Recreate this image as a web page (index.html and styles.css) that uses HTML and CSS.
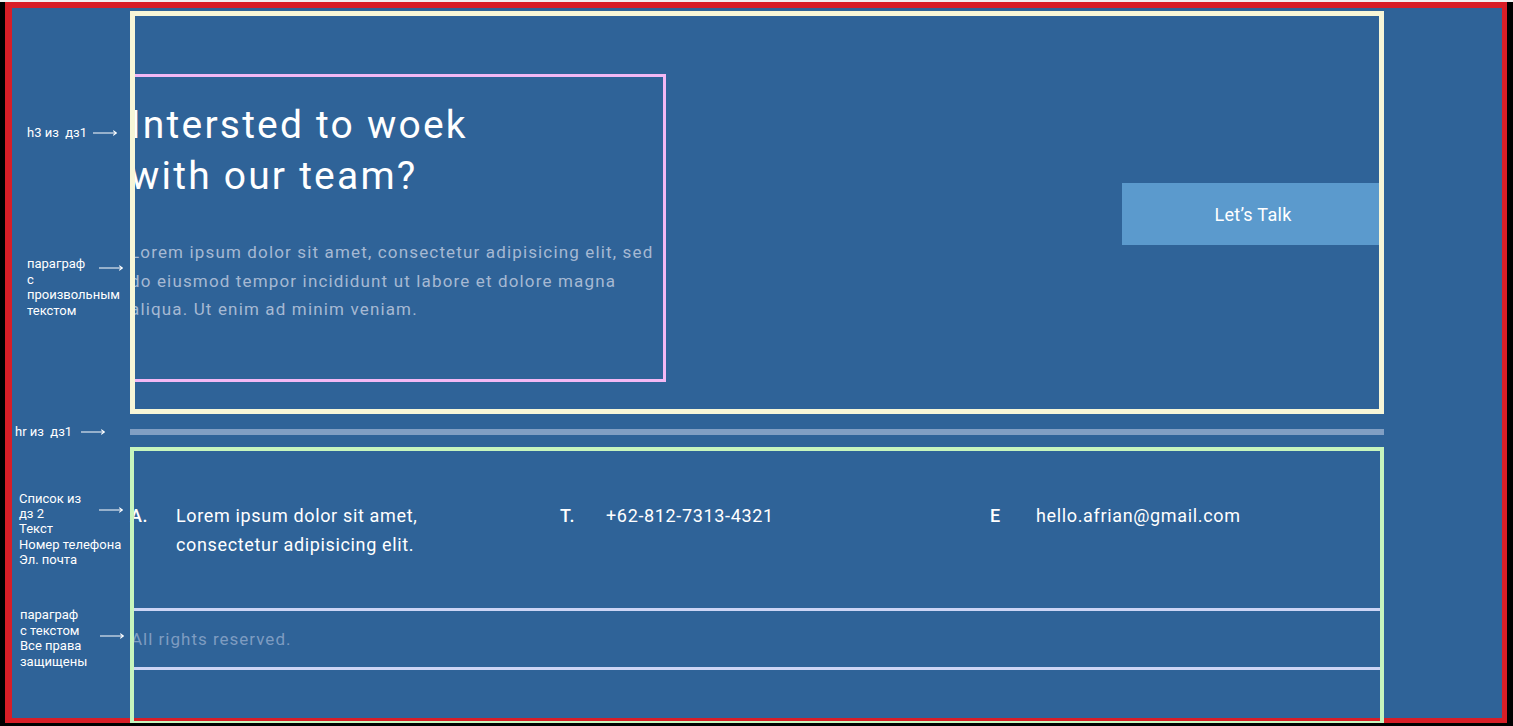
FILE: index.html
```html
<!DOCTYPE html>
<html lang="ru">
<head>
<meta charset="utf-8">
<title>Intersted to woek with our team?</title>
<link rel="stylesheet" href="styles.css">
</head>
<body>
<div class="frame">
  <aside class="notes">
    <div class="note note-h3">
      <span class="note-text">h3 из&nbsp; дз1</span>
      <svg class="arrow" viewBox="0 0 24 8"><path d="M0 4H23.2M20.2 1.6L23.4 4L20.2 6.4"/></svg>
    </div>
    <div class="note note-lead">
      <span class="note-text">параграф<br>с<br>произвольным<br>текстом</span>
      <svg class="arrow" viewBox="0 0 24 8"><path d="M0 4H23.2M20.2 1.6L23.4 4L20.2 6.4"/></svg>
    </div>
    <div class="note note-hr">
      <span class="note-text">hr из&nbsp; дз1</span>
      <svg class="arrow" viewBox="0 0 24 8"><path d="M0 4H23.2M20.2 1.6L23.4 4L20.2 6.4"/></svg>
    </div>
    <div class="note note-list">
      <span class="note-text">Список из<br>дз 2<br>Текст<br>Номер телефона<br>Эл. почта</span>
      <svg class="arrow" viewBox="0 0 24 8"><path d="M0 4H23.2M20.2 1.6L23.4 4L20.2 6.4"/></svg>
    </div>
    <div class="note note-rights">
      <span class="note-text">параграф<br>с текстом<br>Все права<br>защищены</span>
      <svg class="arrow" viewBox="0 0 24 8"><path d="M0 4H23.2M20.2 1.6L23.4 4L20.2 6.4"/></svg>
    </div>
  </aside>

  <main class="content">
    <section class="hero">
      <div class="intro">
        <h3 class="title">Intersted to woek<br>with our team?</h3>
        <p class="lead">Lorem ipsum dolor sit amet, consectetur adipisicing elit, sed do eiusmod tempor incididunt ut labore et dolore magna aliqua. Ut enim ad minim veniam.</p>
      </div>
      <a class="talk">Let’s Talk</a>
    </section>

    <hr class="rule">

    <section class="contacts">
      <ul class="contact-list">
        <li class="contact"><span class="contact-key">A.</span><span class="contact-val">Lorem ipsum dolor sit amet, consectetur adipisicing elit.</span></li>
        <li class="contact"><span class="contact-key">T.</span><span class="contact-val">+62-812-7313-4321</span></li>
        <li class="contact"><span class="contact-key">E</span><span class="contact-val">hello.afrian@gmail.com</span></li>
      </ul>
      <p class="rights">All rights reserved.</p>
    </section>
  </main>
</div>
</body>
</html>
```

FILE: styles.css
```css
html, body {
  margin: 0;
  padding: 0;
}

body {
  background: #000;
  border-top: 2px solid #f2f2f2;
  overflow: hidden;
  font-family: Roboto, "Noto Sans", sans-serif;
}

.frame {
  box-sizing: border-box;
  width: 1502px;
  height: 721px;
  margin-left: 5px;
  border-style: solid;
  border-color: #d81e27;
  border-width: 6px 5px 5px 7px;
  background: #2f6398;
  display: grid;
  grid-template-columns: 118px 1254px;
  align-items: start;
}

/* annotations */
.notes {
  display: flex;
  flex-direction: column;
  color: #fff;
  font-size: 13px;
  line-height: 15.4px;
}

.note {
  display: grid;
  justify-items: start;
  align-items: start;
}

.note > * {
  grid-area: 1 / 1;
}

.arrow {
  width: 24px;
  height: 8px;
  fill: none;
  stroke: #fff;
  stroke-width: 1.1;
}

.note-h3 { margin-top: 117px; }
.note-h3 .note-text { margin-left: 15px; }
.note-h3 .arrow { margin: 4px 0 0 81px; }

.note-lead { margin-top: 116px; }
.note-lead .note-text { margin-left: 15px; }
.note-lead .arrow { margin: 8px 0 0 87px; }

.note-hr { margin-top: 105.6px; }
.note-hr .note-text { margin-left: 3px; }
.note-hr .arrow { margin: 4.4px 0 0 69px; }

.note-list { margin-top: 51.5px; }
.note-list .note-text { margin-left: 7px; }
.note-list .arrow { margin: 15.5px 0 0 87px; }

.note-rights { margin-top: 39.8px; }
.note-rights .note-text { margin-left: 8px; }
.note-rights .arrow { margin: 24.7px 0 0 88px; }

/* main content */
.content {
  padding-top: 3px;
  display: flex;
  flex-direction: column;
}

.hero {
  box-sizing: border-box;
  height: 403px;
  display: flex;
  justify-content: space-between;
  align-items: center;
  outline: 5px solid #f7f6d7;
  outline-offset: -5px;
}

.intro {
  box-sizing: border-box;
  width: 536px;
  height: 308px;
  margin: 63px 0 32px;
  padding-top: 26px;
  outline: 3px solid #f3b8f4;
  outline-offset: -3px;
}

.title {
  margin: 0;
  font-size: 39px;
  font-weight: 400;
  line-height: 51px;
  letter-spacing: 2.2px;
  color: #fff;
}

.lead {
  margin: 36px 0 0;
  font-size: 17px;
  line-height: 28.5px;
  letter-spacing: 1.15px;
  color: #a6b9d3;
}

.talk {
  flex: 0 0 262px;
  height: 62px;
  margin-top: 3px;
  display: flex;
  align-items: center;
  justify-content: center;
  background: #5b9acd;
  color: #fff;
  font-size: 18px;
  letter-spacing: 0.3px;
}

.rule {
  margin: 15px 0 0;
  border: 0;
  height: 6px;
  background: #819fc3;
}

.contacts {
  box-sizing: border-box;
  flex-shrink: 0;
  height: 278px;
  margin-top: 12px;
  padding-top: 55px;
  outline: 4px solid #c7f5bd;
  outline-offset: -4px;
}

.contact-list {
  list-style: none;
  margin: 0;
  padding: 0;
  display: grid;
  grid-template-columns: repeat(3, 1fr);
  column-gap: 36px;
  font-size: 18px;
  line-height: 28.5px;
  letter-spacing: 0.65px;
  color: #fff;
}

.contact {
  display: flex;
}

.contact-key {
  flex: 0 0 46px;
  font-weight: 500;
}

.contact-val {
  max-width: 320px;
}

.rights {
  box-sizing: border-box;
  margin: 49px 0 0;
  height: 62px;
  display: flex;
  align-items: center;
  padding-left: 1px;
  font-size: 17px;
  letter-spacing: 1px;
  color: #7e9cc1;
  outline: 3px solid #cdd5f5;
  outline-offset: -3px;
}
```
